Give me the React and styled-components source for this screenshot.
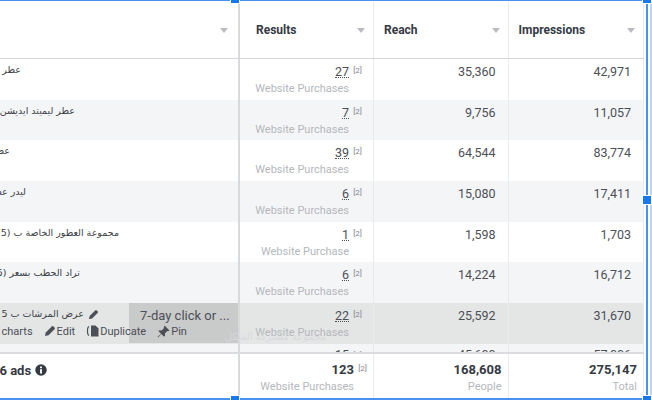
import React from 'react'
import styled, { createGlobalStyle } from 'styled-components'

const rows = [
  { name: 'عطر الصيف الجديد الفاخر', nameEnd: 21, results: '27', reach: '35,360', impressions: '42,971' },
  { name: 'عطر ليميتد ايديشن', nameEnd: 75, results: '7', reach: '9,756', impressions: '11,057' },
  { name: 'عطر الصيف الجديد الفاخر', nameEnd: 10, results: '39', reach: '64,544', impressions: '83,774' },
  { name: 'ليدر عطر الصيف الجديد', nameEnd: 26, results: '6', reach: '15,080', impressions: '17,411' },
  { name: 'مجموعة العطور الخاصة ب (5)', nameEnd: 119, results: '1', label: 'Website Purchase', reach: '1,598', impressions: '1,703' },
  { name: 'تراد الحطب بسعر (5)', nameEnd: 80, results: '6', reach: '14,224', impressions: '16,712' },
  { name: 'عرض المرشات ب 5', nameEnd: 84, results: '22', reach: '25,592', impressions: '31,670', hovered: true },
  { name: '', nameEnd: 0, results: '15', reach: '45,600', impressions: '57,006', peek: true },
]

const GlobalStyle = createGlobalStyle`
  html, body {
    margin: 0;
    width: 652px;
    height: 400px;
    overflow: hidden;
    background: #fff;
    font-family: Roboto, "Liberation Sans", sans-serif;
  }
`

const Frame = styled.div`
  position: relative;
  width: 652px;
  height: 400px;
  overflow: hidden;
  background: #fff;
`
const Table = styled.div`
  display: flex;
  flex-direction: column;
  width: 644px;
  height: 398px;
  padding-top: 1px;
`
const Columns = styled.div`
  display: grid;
  grid-template-columns: 240px 134px 134.5px 135.5px;
`
const HeaderRow = styled(Columns)`
  height: 58px;
  padding-top: 1px;
  box-sizing: border-box;
  border-bottom: 1px solid #d4d6da;
  flex-shrink: 0;
`
const HeaderCell = styled.div`
  display: flex;
  align-items: center;
  justify-content: space-between;
  padding: 0 ${p => p.$right || 8}px 0 ${p => p.$left || 10}px;
  border-right: ${p => p.$wide ? '2px solid #d8d9db' : '1px solid #e9eaed'};
  box-sizing: border-box;
  font-size: 12px;
  font-weight: 700;
  color: #353a43;
`
const Caret = styled.span`
  width: 0;
  height: 0;
  border-left: 4px solid transparent;
  border-right: 4px solid transparent;
  border-top: 5px solid #b9bcc1;
  margin-top: 1px;
`
const Body = styled.div`
  position: relative;
  height: 293px;
  overflow: hidden;
  flex-shrink: 0;
`
const Row = styled(Columns)`
  height: 40.7px;
  background-color: ${p => p.$hovered ? '#e4e6e6' : p.$stripe ? '#f4f5f7' : '#fff'};
`
const NameCell = styled.div`
  position: relative;
  box-sizing: border-box;
  border-right: 2px solid #d8d9db;
  font-size: 11px;
  color: #3c3f45;
`
const Name = styled.div`
  width: ${p => p.$end}px;
  padding-top: 4px;
  white-space: nowrap;
  direction: rtl;
  text-align: right;
  font-family: "DejaVu Sans", sans-serif;
  font-size: 9.500px;
  line-height: 14px;
`
const PencilMark = styled.span`
  position: absolute;
  top: 6px;
  left: 88px;
  line-height: 0;
`
const Actions = styled.div`
  position: absolute;
  z-index: 1;
  top: 20px;
  left: -25px;
  display: flex;
  align-items: center;
  height: 16px;
  gap: 11px;
  font-size: 11px;
  color: #4b4f56;
  white-space: nowrap;
`
const Action = styled.span`
  display: flex;
  align-items: center;
  gap: 1px;
`
const AttributionTip = styled.div`
  position: absolute;
  top: 0;
  left: 129px;
  width: 109px;
  height: 40px;
  padding: 4px 0 0 11px;
  box-sizing: border-box;
  background: #c9caca;
  color: #4b4f56;
  font-size: 13px;
  line-height: 18px;
  white-space: nowrap;
`
const ValueCell = styled.div`
  position: relative;
  box-sizing: border-box;
  padding: ${p => p.$peek ? 4 : 6}px 12px 0 0;
  border-right: 1px solid #e9eaed;
  font-size: 12.500px;
  line-height: 14px;
  text-align: right;
  color: #4b4f56;
`
const ResultCell = styled(ValueCell)`
  padding-right: 24px;
`
const Dotted = styled.span`
  display: inline-block;
  border-bottom: 1px dotted #4b4f56;
  line-height: 11px;
`
const Note = styled.sup`
  position: absolute;
  top: 7px;
  right: 11px;
  font-size: 8px;
  line-height: 9px;
  color: #80848c;
`
const Sub = styled.div`
  margin-top: 3px;
  font-size: 11px;
  font-weight: 400;
  line-height: 13px;
  color: #b4b7bc;
  white-space: nowrap;
`
const Ghost = styled.div`
  position: absolute;
  top: 271px;
  left: 208px;
  width: 118px;
  direction: rtl;
  white-space: nowrap;
  font-family: "DejaVu Sans", sans-serif;
  font-size: 10px;
  line-height: 14px;
  color: #d6d9db;
`
const Footer = styled(Columns)`
  flex: 1;
  border-top: 2px solid #dadcdf;
  box-sizing: border-box;
`
const FooterName = styled(NameCell)`
  padding-top: 8px;
  font-size: 13px;
  font-weight: 700;
  color: #353a43;
`
const AdsCount = styled.div`
  display: flex;
  align-items: center;
  gap: 4px;
  height: 16px;
  margin-left: -8px;
`
const FooterValue = styled(ValueCell)`
  padding: 9px 6px 0 0;
  font-weight: 700;
  color: #353a43;
  font-size: 13px;
`
const FooterNote = styled(Note)`
  top: 10px;
  right: 6px;
  font-weight: 400;
`
const FooterResult = styled(FooterValue)`
  padding-right: 19px;
`
const Outline = styled.div`
  position: absolute;
  background: ${p => p.$color || '#4a90f0'};
  left: ${p => p.$x}px;
  top: ${p => p.$y}px;
  width: ${p => p.$w}px;
  height: ${p => p.$h}px;
`
const Handle = styled.div`
  position: absolute;
  width: 8px;
  height: 8px;
  background: #1877f2;
  border: 1px solid #fff;
  left: ${p => p.$x}px;
  top: ${p => p.$y}px;
`

const PencilIcon = ({ size = 12 }) => (
  <svg width={size} height={size} viewBox="0 0 24 24" fill="#4b4f56">
    <path d="M2 22l1.500-7L15.500 3a2.500 2.500 0 0 1 3.500 0l2 2a2.500 2.500 0 0 1 0 3.500L9 20.500z" />
  </svg>
)
const DuplicateIcon = () => (
  <svg width="13" height="12" viewBox="0 0 26 24" fill="#4b4f56">
    <path d="M10 1h9l6 6v16H10z" />
    <path d="M6 3C3 4 3 7 3 12s0 8 3 9" fill="none" stroke="#4b4f56" strokeWidth="2.400" />
  </svg>
)
const PinIcon = () => (
  <svg width="13" height="13" viewBox="0 0 24 24" fill="#4b4f56">
    <path d="M14 1l9 9-2.500 1.500-1.500-.5-4.500 4.500.5 4L13 21.500 8 16.500 2 23l-1-1 6.500-6L2.500 11 4.500 9.500l4 .5L13 5.500 12.500 4z" />
  </svg>
)
const InfoIcon = () => (
  <svg width="12" height="12" viewBox="0 0 22 22">
    <circle cx="11" cy="11" r="10.500" fill="#353a43" />
    <rect x="9.300" y="9.500" width="3.400" height="8" fill="#fff" />
    <rect x="9.300" y="4.500" width="3.400" height="3.200" fill="#fff" />
  </svg>
)

const App = () => (
  <Frame>
    <GlobalStyle />
    <Table>
      <HeaderRow>
        <HeaderCell $wide $right={10}><span /><Caret /></HeaderCell>
        <HeaderCell $left={16}>Results<Caret /></HeaderCell>
        <HeaderCell>Reach<Caret /></HeaderCell>
        <HeaderCell>Impressions<Caret /></HeaderCell>
      </HeaderRow>
      <Body>
        {rows.map((row, i) => (
          <Row key={i} $stripe={i % 2 === 1} $hovered={row.hovered}>
            <NameCell>
              {row.name && <Name $end={row.nameEnd}>{row.name}</Name>}
              {row.hovered && (
                <>
                  <PencilMark><PencilIcon size={11} /></PencilMark>
                  <AttributionTip>7-day click or ...</AttributionTip>
                  <Actions>
                    <span>View charts</span>
                    <Action><PencilIcon />Edit</Action>
                    <Action><DuplicateIcon />Duplicate</Action>
                    <Action><PinIcon />Pin</Action>
                  </Actions>
                </>
              )}
            </NameCell>
            <ResultCell $peek={row.peek}>
              <Dotted>{row.results}</Dotted>
              <Note>[2]</Note>
              <Sub>{row.label || 'Website Purchases'}</Sub>
            </ResultCell>
            <ValueCell $peek={row.peek}>{row.reach}</ValueCell>
            <ValueCell $peek={row.peek}>{row.impressions}</ValueCell>
          </Row>
        ))}
        <Ghost>مجموعة مشتركة الشكل</Ghost>
      </Body>
      <Footer>
        <FooterName>
          <AdsCount>
            <span>16 ads</span>
            <InfoIcon />
          </AdsCount>
        </FooterName>
        <FooterResult>
          123
          <FooterNote>[2]</FooterNote>
          <Sub>Website Purchases</Sub>
        </FooterResult>
        <FooterValue>168,608<Sub>People</Sub></FooterValue>
        <FooterValue>275,147<Sub>Total</Sub></FooterValue>
      </Footer>
    </Table>
    <Outline $x={0} $y={0} $w={650} $h={1} />
    <Outline $x={0} $y={398} $w={650} $h={2} />
    <Outline $x={646} $y={0} $w={2} $h={399} />
    <Outline $x={650} $y={0} $w={1.500} $h={400} $color="#bcd6fb" />
    <Handle $x={230} $y={-6} />
    <Handle $x={230} $y={395} />
    <Handle $x={642} $y={195} />
    <Handle $x={642} $y={395} />
    <Handle $x={642} $y={-6} />
  </Frame>
)

export default App
